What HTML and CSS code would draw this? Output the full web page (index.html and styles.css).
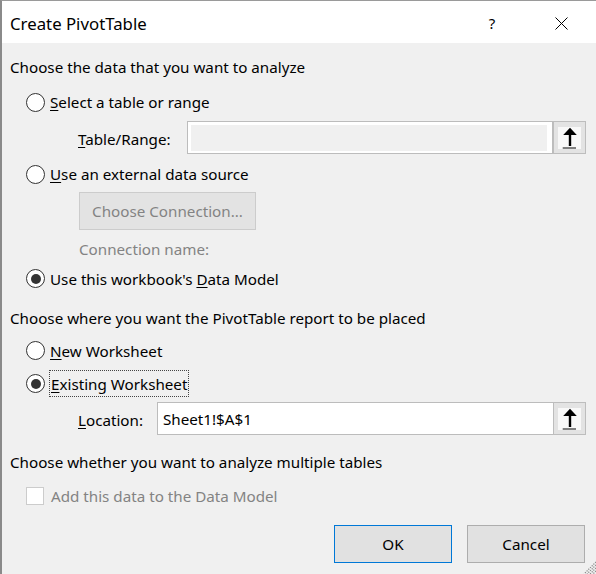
FILE: index.html
```html
<!DOCTYPE html>
<html>
<head>
<meta charset="utf-8">
<link rel="stylesheet" href="styles.css">
</head>
<body>
<div class="dialog">
  <div class="titlebar">
    <div class="title">Create PivotTable</div>
    <div class="help">?</div>
    <div class="close">
      <svg width="13" height="13" viewBox="0 0 13 13"><path d="M0.5 0.5 L12.5 12.5 M12.5 0.5 L0.5 12.5" stroke="#000" stroke-width="1" fill="none"/></svg>
    </div>
  </div>
  <div class="content">
    <div class="heading h1">Choose the data that you want to analyze</div>
    <div class="option r1"><span class="radio"></span><span class="label"><u>S</u>elect a table or range</span></div>
    <div class="field-row table-row">
      <span class="field-label tr-label"><u>T</u>able/Range:</span>
      <div class="input disabled tr-input"><div class="input-fill"></div></div>
      <div class="pick"><div class="pick-inner"><svg width="23" height="22" viewBox="0 0 23 22"><path d="M12 0.8 L5.2 8 L10.8 8 L10.8 19 L13.2 19 L13.2 8 L18.8 8 Z" fill="#000"/><rect x="4.7" y="20.4" width="13.3" height="1.2" fill="#333"/></svg></div></div>
    </div>
    <div class="option r2"><span class="radio"></span><span class="label"><u>U</u>se an external data source</span></div>
    <div class="conn-row"><div class="btn disabled-btn">Choose Connection...</div></div>
    <div class="conn-name">Connection name:</div>
    <div class="option r3"><span class="radio checked"></span><span class="label">Use this workbook's <u>D</u>ata Model</span></div>
    <div class="heading h2">Choose where you want the PivotTable report to be placed</div>
    <div class="option r4"><span class="radio"></span><span class="label"><u>N</u>ew Worksheet</span></div>
    <div class="option r5"><span class="radio checked"></span><span class="label focus"><u>E</u>xisting Worksheet</span></div>
    <div class="field-row loc-row">
      <span class="field-label loc-label"><u>L</u>ocation:</span>
      <div class="input loc-input">Sheet1!$A$1</div>
      <div class="pick"><div class="pick-inner"><svg width="23" height="22" viewBox="0 0 23 22"><path d="M12 0.8 L5.2 8 L10.8 8 L10.8 19 L13.2 19 L13.2 8 L18.8 8 Z" fill="#000"/><rect x="4.7" y="20.4" width="13.3" height="1.2" fill="#333"/></svg></div></div>
    </div>
    <div class="heading h3">Choose whether you want to analyze multiple tables</div>
    <div class="option check-row"><span class="checkbox"></span><span class="label gray">Add this data to the Data Model</span></div>
    <div class="actions">
      <div class="btn ok">OK</div>
      <div class="btn cancel">Cancel</div>
    </div>
  </div>
  <div class="grip">
    <svg width="13" height="13" viewBox="0 0 13 13">
      <path d="M13 1 L1 13 M13 4 L4 13 M13 7 L7 13 M13 10 L10 13" stroke="#8a8a8a" stroke-width="1.2" stroke-dasharray="1.2 1.2" fill="none"/>
    </svg>
  </div>
</div>
</body>
</html>
```
FILE: styles.css
```css
* { box-sizing: border-box; }
html, body { margin: 0; padding: 0; background: #f0f0f0; }
.dialog {
  position: relative;
  width: 596px;
  height: 574px;
  background: #f0f0f0;
  border-left: 2px solid #8a8a8a;
  border-top: 1px solid #9a9a9a;
  font-family: "Noto Sans", "Open Sans", sans-serif;
  font-size: 15.2px;
  color: #000;
  overflow: hidden;
}
.titlebar {
  height: 42px;
  background: #fff;
  display: flex;
  align-items: center;
}
.title {
  flex: 1;
  padding-left: 8px;
  font-size: 16.8px;
  padding-top: 2px;
}
.help {
  width: 20px;
  text-align: center;
  font-size: 15px;
  margin-right: 36px;
  padding-top: 2px;
}
.close {
  width: 46px;
  display: flex;
  justify-content: center;
  align-items: center;
  margin-right: 12px;
  padding-top: 2px;
}
.content { padding-left: 8px; }
.heading { display: flex; align-items: center; white-space: nowrap; }
.h1 { height: 48px; }
.h2 { height: 47px; }
.h3 { height: 53px; }
.option { display: flex; align-items: center; padding-left: 16px; white-space: nowrap; }
.r1 { height: 22px; }
.r2 { height: 26px; }
.r3 { height: 31px; }
.r4 { height: 19px; }
.r5 { height: 27px; margin-top: 10px; }
.check-row { height: 14px; margin-top: 1px; }
.radio {
  width: 19px;
  height: 19px;
  border: 1.6px solid #333;
  border-radius: 50%;
  background: #fff;
  display: flex;
  align-items: center;
  justify-content: center;
  flex: none;
}
.radio.checked::after {
  content: "";
  width: 10px;
  height: 10px;
  border-radius: 50%;
  background: #333;
}
.label { margin-left: 5px; }
.label u, .field-label u { text-underline-offset: 2px; }
.focus {
  border: 1px dotted #444;
  height: 27px;
  display: flex;
  align-items: center;
  padding: 0 1px 0 1px;
  margin-left: 4px;
}
.checkbox {
  width: 18px;
  height: 18px;
  background: #fff;
  border: 1px solid #cccccc;
  flex: none;
}
.gray { color: #838383; margin-left: 7px; }
.field-row { display: flex; align-items: center; padding-left: 68px; }
.table-row { height: 47px; margin-top: 1px; }
.loc-row { height: 33px; margin-top: 5px; }
.field-label { padding-top: 2px; }
.tr-label { width: 109px; }
.loc-label { width: 79px; }
.input {
  height: 33px;
  border: 1px solid #bcbcbc;
  background: #fff;
}
.tr-input { width: 366px; padding: 3px 5px 2px 3px; }
.input-fill { width: 100%; height: 100%; background: #f0f0f0; }
.loc-input {
  width: 396px;
  display: flex;
  align-items: center;
  padding-left: 5px;
  padding-top: 1px;
  border-right: none;
}
.pick {
  width: 33px;
  height: 33px;
  border: 1px solid #bdbdbd;
  background: #e3e3e3;
  display: flex;
  align-items: center;
  justify-content: center;
  flex: none;
}
.pick-inner {
  width: 23px;
  height: 22px;
  background: #f8f8f8;
  display: flex;
}
.conn-row { height: 48px; display: flex; align-items: center; padding-left: 69px; }
.btn {
  height: 38px;
  display: flex;
  align-items: center;
  justify-content: center;
  background: #e1e1e1;
  border: 1px solid #adadad;
}
.disabled-btn {
  width: 177px;
  background: #e3e3e3;
  border-color: #cccccc;
  color: #838383;
}
.conn-name { height: 28px; display: flex; align-items: center; padding-left: 69px; color: #838383; }
.actions {
  display: flex;
  justify-content: flex-end;
  gap: 15px;
  margin-top: 22px;
  padding-right: 11px;
}
.ok, .cancel { width: 118px; }
.ok { border-color: #0078d7; }
.grip {
  position: absolute;
  right: 0;
  bottom: 0;
  width: 13px;
  height: 13px;
  display: flex;
}
```
